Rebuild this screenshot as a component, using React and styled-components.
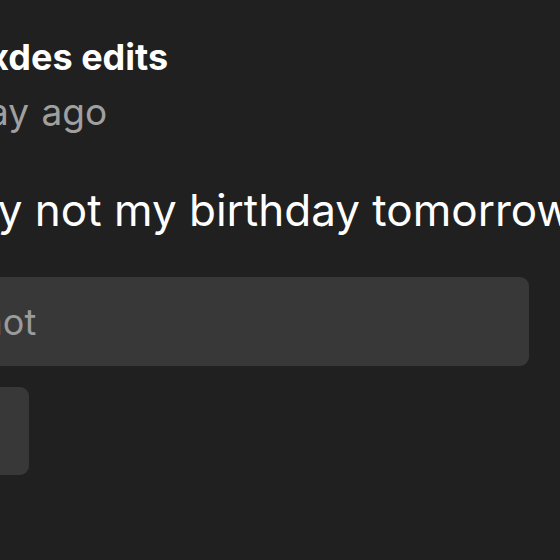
import React from "react";
import styled, { createGlobalStyle } from "styled-components";

const Global = createGlobalStyle`
  html, body { margin: 0; padding: 0; background: #202020; overflow: hidden; }
  body { font-family: Inter, "Noto Sans", "Liberation Sans", sans-serif; -webkit-font-smoothing: antialiased; }
`;

const Page = styled.div`
  width: 560px;
  height: 560px;
  overflow: hidden;
  background: #202020;
  display: flex;
  flex-direction: column;
  padding-top: 34px;
  box-sizing: border-box;
`;

const Line = styled.div`
  margin-left: ${(p) => -p.$hide}px;
  margin-top: ${(p) => p.$mt || 0}px;
  white-space: nowrap;
  color: ${(p) => p.$color};
  font-size: ${(p) => p.$size}px;
  font-weight: ${(p) => p.$weight || 400};
  line-height: ${(p) => p.$lh}px;
  word-spacing: ${(p) => p.$ws || 0}px;
`;

const Option = styled.div`
  margin-left: -60px;
  width: 589px;
  height: 89px;
  border-radius: 9px;
  background: #383838;
  display: flex;
  align-items: center;
  box-sizing: border-box;
  padding-left: 20px;
  margin-top: ${(p) => p.$mt}px;
  overflow: hidden;
`;

const OptionText = styled.span`
  margin-left: ${(p) => -p.$hide}px;
  color: #9b9b9b;
  font-size: 36px;
  white-space: nowrap;
`;

const ButtonRow = styled.div`
  display: flex;
  gap: 20px;
  margin-left: -60px;
  margin-top: 21px;
`;

const Btn = styled.div`
  width: 89px;
  height: 88px;
  border-radius: 9px;
  background: #383838;
`;

export default function App() {
  return (
    <>
      <Global />
      <Page>
        <Line $hide={57} $color="#ffffff" $size={36} $weight={700} $lh={46}>
          Boxdes edits
        </Line>
        <Line $hide={62} $color="#a0a0a0" $size={37} $lh={44} $mt={10} $ws={2}>
          1 day ago
        </Line>
        <Line $hide={71} $color="#ffffff" $size={44} $lh={56} $mt={48}>
          Why not my birthday tomorrow?
        </Line>
        <Option $mt={39}>
          <OptionText $hide={65}>Why not</OptionText>
        </Option>
        <ButtonRow>
          <Btn />
        </ButtonRow>
      </Page>
    </>
  );
}
